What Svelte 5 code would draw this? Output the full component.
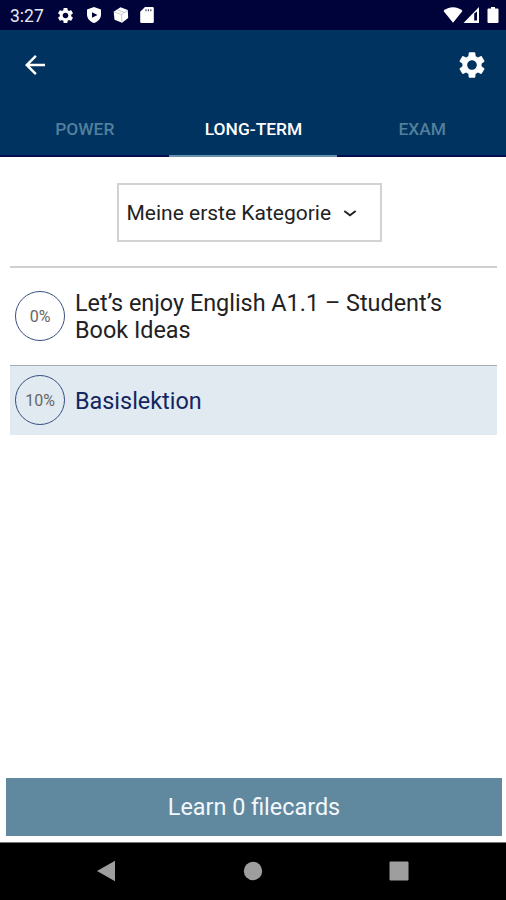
<script>
  const gear =
    "M19.14 12.94c.04-.3.06-.61.06-.94 0-.32-.02-.64-.07-.94l2.03-1.58c.18-.14.23-.41.12-.61l-1.92-3.32c-.12-.22-.37-.29-.59-.22l-2.39.96c-.5-.38-1.03-.7-1.62-.94L14.4 2.81c-.04-.24-.24-.41-.48-.41h-3.84c-.24 0-.43.17-.47.41l-.36 2.54c-.59.24-1.13.57-1.62.94l-2.39-.96c-.22-.08-.47 0-.59.22L2.74 8.87c-.12.21-.08.47.12.61l2.03 1.58c-.05.3-.09.63-.09.94s.02.64.07.94l-2.03 1.58c-.18.14-.23.41-.12.61l1.92 3.32c.12.22.37.29.59.22l2.39-.96c.5.38 1.03.7 1.62.94l.36 2.54c.05.24.24.41.48.41h3.84c.24 0 .44-.17.47-.41l.36-2.54c.59-.24 1.13-.56 1.62-.94l2.39.96c.22.08.47 0 .59-.22l1.92-3.32c.12-.22.07-.47-.12-.61l-2.01-1.58zM12 15.6c-1.98 0-3.6-1.62-3.6-3.6s1.62-3.6 3.6-3.6 3.6 1.62 3.6 3.6-1.62 3.6-3.6 3.6z";

  const tabs = ["Power", "Long-term", "Exam"];
  const lessons = [
    { title: "Let’s enjoy English A1.1 – Student’s Book Ideas", percent: 0 },
    { title: "Basislektion", percent: 10 },
  ];

  let activeTab = $state("Long-term");
  let selected = $state(1);
</script>

<div class="screen">
  <div class="status">
    <span class="time">3:27</span>
    <div class="notifications">
      <svg width="19" height="19" viewBox="0 0 24 24"><path d={gear} /></svg>
      <svg width="16" height="18" viewBox="0 0 16 18">
        <path d="M8 1 15 3.500V8.500C15 12.500 12 15.800 8 17 4 15.800 1 12.500 1 8.500V3.500Z" />
        <path class="cut" d="M6 6.200 11.500 9 6 11.800Z" />
      </svg>
      <svg width="16" height="18" viewBox="0 0 16 18">
        <path d="M7.500 1.200 14.800 4 15.200 12 9 16.800 1.500 13.800.700 5.800Z" />
        <path class="edge" d="M.9 5.900 8.500 8.500 14.900 4.200M8.500 8.500 9 16.500M4 3.700 11.500 6.400" />
      </svg>
      <svg width="14" height="18" viewBox="0 0 14 18">
        <path d="M5 1H12.500Q13.800 1 13.800 2.300V15.700Q13.800 17 12.500 17H1.500Q.2 17 .2 15.700V5.800Z" />
        <path class="slots" d="M6 3.200V5.200M8.400 3.200V5.200M10.800 3.200V5.200" />
      </svg>
    </div>
    <div class="system">
      <svg width="20" height="18" viewBox="0 0 20 18">
        <path d="M.5 5Q4.500 1.300 10 1.300T19.500 5L10 16.700Z" />
      </svg>
      <svg width="17" height="18" viewBox="0 0 17 18">
        <path d="M16 1V17H.5Z" />
        <path class="cut" d="M11.200 7.500 14 5.500V14.500H11.200Z" />
      </svg>
      <svg class="battery" width="12" height="18" viewBox="0 0 12 18">
        <path d="M4 1H8V2.500H10.500Q11.500 2.500 11.500 3.500V16Q11.500 17 10.500 17H1.500Q.5 17 .5 16V3.500Q.5 2.500 1.500 2.500H4Z" />
      </svg>
    </div>
  </div>

  <header>
    <div class="toolbar">
      <button aria-label="Back">
        <svg width="30" height="30" viewBox="0 0 24 24">
          <path d="M20 11H7.830l5.590-5.590L12 4l-8 8 8 8 1.410-1.410L7.830 13H20v-2z" />
        </svg>
      </button>
      <button aria-label="Settings">
        <svg width="32" height="32" viewBox="0 0 24 24"><path d={gear} /></svg>
      </button>
    </div>
    <nav>
      {#each tabs as tab}
        <button class:active={activeTab === tab} onclick={() => (activeTab = tab)}>{tab}</button>
      {/each}
    </nav>
  </header>

  <main>
    <button class="category">
      <span>Meine erste Kategorie</span>
      <svg width="14" height="10" viewBox="0 0 14 10"><path d="M1.300 3 7 7.300 12.700 3" /></svg>
    </button>

    <div class="lessons">
      {#each lessons as lesson, i}
        <button class="lesson" class:selected={selected === i} onclick={() => (selected = i)}>
          <span class="percent">{lesson.percent}%</span>
          <span class="title">{lesson.title}</span>
        </button>
      {/each}
    </div>
  </main>

  <button class="learn">Learn 0 filecards</button>

  <div class="navbar">
    <svg width="20" height="22" viewBox="0 0 20 22"><path d="M1 11 19 .8V21.200Z" /></svg>
    <svg width="20" height="22" viewBox="0 0 20 22"><circle cx="10" cy="11" r="9.200" /></svg>
    <svg width="20" height="22" viewBox="0 0 20 22"><rect x=".5" y="1.500" width="19" height="19" rx="1" /></svg>
  </div>
</div>

<style>
  :global(body) {
    background: #fff;
  }

  .screen {
    display: flex;
    flex-direction: column;
    height: 900px;
    font-family: Roboto, "Liberation Sans", sans-serif;
  }

  button {
    padding: 0;
    border: none;
    background: none;
    font: inherit;
    color: inherit;
    cursor: pointer;
  }

  svg {
    display: block;
    flex: none;
    fill: #fff;
  }

  .status {
    display: flex;
    align-items: center;
    box-sizing: border-box;
    height: 30px;
    padding: 0 7px 0 10px;
    background: #000339;
    color: #e8e8f0;
  }

  .time {
    width: 47px;
    padding-top: 1px;
    font-size: 17.5px;
  }

  .notifications {
    display: flex;
    align-items: center;
    gap: 11px;
    margin-left: -1px;
  }

  .system {
    display: flex;
    margin-left: auto;
  }

  .battery {
    margin-left: 7px;
  }

  .cut {
    fill: #000339;
  }

  .edge {
    fill: none;
    stroke: #b9bbc4;
    stroke-width: 0.8;
  }

  .slots {
    stroke: #4c4e70;
    stroke-width: 1.2;
  }

  header {
    height: 127px;
    background: #00335f;
  }

  .toolbar {
    display: flex;
    align-items: center;
    justify-content: space-between;
    height: 69px;
    padding: 0 18px 0 20px;
  }

  nav {
    display: grid;
    grid-template-columns: repeat(3, 1fr);
    height: 58px;
  }

  nav button {
    padding: 3px 0 0 1px;
    border-bottom: 2px solid #000c50;
    color: #527f9b;
    font-size: 17.4px;
    font-weight: 500;
    text-transform: uppercase;
  }

  nav button.active {
    border-color: #6690ad;
    color: #fff;
  }

  main {
    display: flex;
    flex: 1;
    flex-direction: column;
    align-items: center;
    padding: 26px 9px 0 10px;
  }

  .category {
    display: flex;
    align-items: center;
    gap: 12px;
    box-sizing: border-box;
    width: 265px;
    height: 59px;
    margin-right: 9px;
    padding-left: 8px;
    border: 2px solid #d2d2d2;
    color: #222;
    font-size: 21px;
  }

  .category svg {
    fill: none;
    stroke: #222;
    stroke-width: 2;
  }

  .lessons {
    width: 100%;
    margin-top: 24px;
    border-top: 2px solid #d0d0d0;
  }

  .lesson {
    display: flex;
    align-items: center;
    gap: 10px;
    box-sizing: border-box;
    width: 100%;
    height: 97px;
    padding: 0 40px 1px 5px;
    color: #222;
    font-size: 23.4px;
    line-height: 27px;
    text-align: left;
  }

  .lesson.selected {
    height: 70px;
    border-top: 1px solid #a3acae;
    background: #e1eaf0;
    color: #14265f;
  }

  .title {
    padding-top: 2px;
  }

  .percent {
    display: flex;
    flex: none;
    align-items: center;
    justify-content: center;
    box-sizing: border-box;
    width: 50px;
    height: 50px;
    border: 1.500px solid #3a4e83;
    border-radius: 50%;
    color: #666;
    font-size: 16px;
  }

  .learn {
    height: 58px;
    margin: 0 4px 0 6px;
    background: #6089a0;
    color: #f4f8fb;
    font-size: 23.4px;
  }

  .navbar {
    display: flex;
    align-items: center;
    justify-content: space-between;
    box-sizing: border-box;
    height: 58px;
    margin-top: 6px;
    padding: 0 97px 2px 96px;
    border-top: 1px solid #777;
    background: #000;
  }

  .navbar svg {
    fill: #9e9e9e;
  }
</style>
